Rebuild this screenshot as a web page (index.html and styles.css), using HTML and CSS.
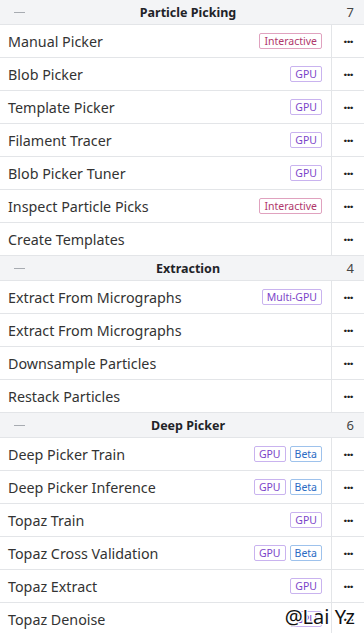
FILE: index.html
```html
<!DOCTYPE html>
<html>
<head>
<meta charset="utf-8">
<link rel="stylesheet" href="styles.css">
</head>
<body>
<div class="list">
  <div class="group-head"><span class="minus"></span><span class="gtitle">Particle Picking</span><span class="gcount">7</span></div>
  <div class="row"><div class="main"><span class="name">Manual Picker</span><span class="badges"><span class="badge inter">Interactive</span></span></div><div class="more">···</div></div>
  <div class="row"><div class="main"><span class="name">Blob Picker</span><span class="badges"><span class="badge gpu">GPU</span></span></div><div class="more">···</div></div>
  <div class="row"><div class="main"><span class="name">Template Picker</span><span class="badges"><span class="badge gpu">GPU</span></span></div><div class="more">···</div></div>
  <div class="row"><div class="main"><span class="name">Filament Tracer</span><span class="badges"><span class="badge gpu">GPU</span></span></div><div class="more">···</div></div>
  <div class="row"><div class="main"><span class="name">Blob Picker Tuner</span><span class="badges"><span class="badge gpu">GPU</span></span></div><div class="more">···</div></div>
  <div class="row"><div class="main"><span class="name">Inspect Particle Picks</span><span class="badges"><span class="badge inter">Interactive</span></span></div><div class="more">···</div></div>
  <div class="row"><div class="main"><span class="name">Create Templates</span></div><div class="more">···</div></div>

  <div class="group-head"><span class="minus"></span><span class="gtitle">Extraction</span><span class="gcount">4</span></div>
  <div class="row"><div class="main"><span class="name">Extract From Micrographs</span><span class="badges"><span class="badge gpu">Multi-GPU</span></span></div><div class="more">···</div></div>
  <div class="row"><div class="main"><span class="name">Extract From Micrographs</span></div><div class="more">···</div></div>
  <div class="row"><div class="main"><span class="name">Downsample Particles</span></div><div class="more">···</div></div>
  <div class="row"><div class="main"><span class="name">Restack Particles</span></div><div class="more">···</div></div>

  <div class="group-head"><span class="minus"></span><span class="gtitle">Deep Picker</span><span class="gcount">6</span></div>
  <div class="row"><div class="main"><span class="name">Deep Picker Train</span><span class="badges"><span class="badge gpu">GPU</span><span class="badge beta">Beta</span></span></div><div class="more">···</div></div>
  <div class="row"><div class="main"><span class="name">Deep Picker Inference</span><span class="badges"><span class="badge gpu">GPU</span><span class="badge beta">Beta</span></span></div><div class="more">···</div></div>
  <div class="row"><div class="main"><span class="name">Topaz Train</span><span class="badges"><span class="badge gpu">GPU</span></span></div><div class="more">···</div></div>
  <div class="row"><div class="main"><span class="name">Topaz Cross Validation</span><span class="badges"><span class="badge gpu">GPU</span><span class="badge beta">Beta</span></span></div><div class="more">···</div></div>
  <div class="row"><div class="main"><span class="name">Topaz Extract</span><span class="badges"><span class="badge gpu">GPU</span></span></div><div class="more">···</div></div>
  <div class="row"><div class="main"><span class="name">Topaz Denoise</span><span class="badges"><span class="badge gpu">GPU</span></span></div><div class="more">···</div></div>
</div>
<div class="watermark">@Lai Yz</div>
</body>
</html>
```
FILE: styles.css
```css
html, body {
  margin: 0;
  padding: 0;
  background: #fff;
  overflow: hidden;
}
body {
  font-family: "Noto Sans", "Open Sans", sans-serif;
  color: #333;
  width: 364px;
  height: 633px;
  position: relative;
}
.list {
  display: flex;
  flex-direction: column;
}
.group-head {
  height: 24px;
  border-top: 1px solid #e3e5e8;
  background: #f3f4f6;
  display: grid;
  grid-template-columns: 40px 1fr 28px;
  align-items: center;
}
.list > .group-head:first-child {
  border-top: none;
}
.minus {
  width: 11px;
  height: 1px;
  background: #a7abb1;
  margin-left: 14px;
}
.gtitle {
  text-align: center;
  font-weight: 700;
  font-size: 12.5px;
  color: #1f2328;
}
.gcount {
  text-align: right;
  padding-right: 10px;
  font-size: 13px;
  color: #444;
}
.row {
  height: 32px;
  border-top: 1px solid #e3e5e8;
  display: flex;
}
.main {
  flex: 1;
  display: flex;
  align-items: center;
  justify-content: space-between;
  padding: 0 9px 0 8px;
  border-right: 1px solid #e3e5e8;
  min-width: 0;
}
.name {
  font-size: 14.3px;
  color: #333;
  white-space: nowrap;
}
.badges {
  display: flex;
  gap: 4px;
}
.badge {
  font-size: 10.5px;
  line-height: 14px;
  padding: 0 4px;
  border: 1px solid;
  border-radius: 2px;
  background: #fff;
}
.inter {
  color: #b0386c;
  border-color: #e0a2bf;
}
.gpu {
  color: #7b45c9;
  border-color: #c9b3ef;
}
.beta {
  color: #2a6bc4;
  border-color: #9ec2ec;
}
.more {
  width: 32px;
  display: flex;
  align-items: center;
  justify-content: center;
  font-size: 15px;
  font-weight: 700;
  color: #222;
  letter-spacing: -1px;
}
.watermark {
  position: absolute;
  right: 9px;
  bottom: 3px;
  font-size: 20px;
  color: #111;
  font-family: "Noto Sans", sans-serif;
  text-shadow: 1px 1px 0 #fff, -1px -1px 0 #fff, 1px -1px 0 #fff, -1px 1px 0 #fff;
}
```
